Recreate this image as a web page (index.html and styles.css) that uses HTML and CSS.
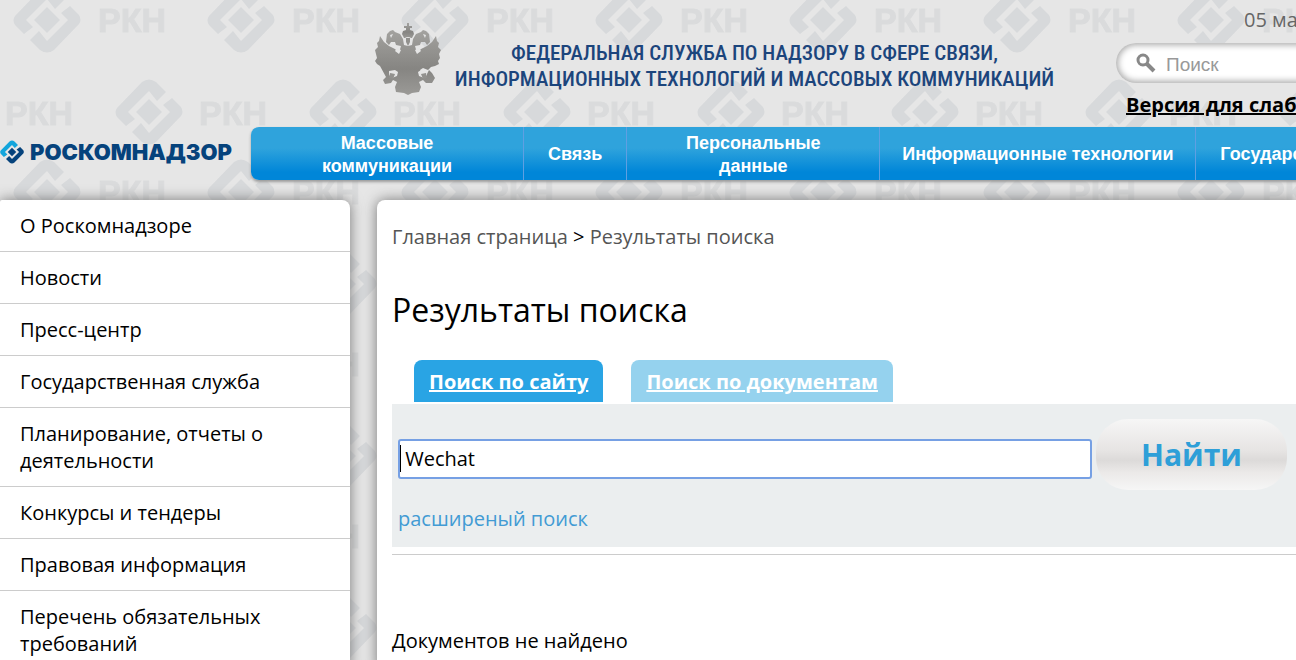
FILE: index.html
```
<!DOCTYPE html>
<html lang="ru">

<head>
    <meta charset="UTF-8" />
    <meta name="viewport" content="width=device-width, initial-scale=1.0" />
    <title>Роскомнадзор - Результаты поиска</title>
    <link rel="stylesheet" href="styles.css">
</head>

<body>
    <!-- Фон с логотипами -->
    <svg class="background" aria-hidden="true">
        <defs>
            <g id="mark">
                <path d="M-32-4L-7-30Q0-35 7-30L17-20L8-11L0-21L-21 0L-14 7L-23 14L-32 5Q-35 0-32-4Z" />
                <path d="M32 4L7 30Q0 35-7 30L-17 20L-8 11L0 21L21 0L14-7L23-14L32-5Q35 0 32 4Z" />
                <path d="M0-13L13 0L0 13L-13 0Z" />
            </g>
            <pattern id="tile" width="194" height="172" patternUnits="userSpaceOnUse">
                <use href="#mark" x="47" y="20" />
                <use href="#mark" x="47" y="192" />
                <text x="98" y="32">РКН</text>
                <use href="#mark" x="149" y="112" />
                <text x="5" y="125">РКН</text>
            </pattern>
        </defs>
        <rect width="100%" height="100%" fill="url(#tile)" />
    </svg>

    <div class="page">
        <header>
            <div class="header-top">
                <svg class="eagle" viewBox="0 0 66 72" aria-hidden="true">
                    <defs>
                        <linearGradient id="silver" x1="0" y1="0" x2="0" y2="1">
                            <stop offset="0" stop-color="#a3a29f" />
                            <stop offset="0.6" stop-color="#868582" />
                            <stop offset="1" stop-color="#9b9a97" />
                        </linearGradient>
                    </defs>
                    <g fill="url(#silver)">
                        <path d="M32 0h2v3h3v2h-2v2l3 1 1 3-2 4h-8l-2-4 1-3 3-1v-2h-2v-2h3z" />
                        <path d="M5 13L9 19L14 23L20 26L24 30L26 23L21 22L20 19L16 19L14 22L11 19L12 11L15 8L18 7L20 9L25 11L28 16L29 22L33 23L37 22L38 16L41 11L46 9L48 7L51 8L54 11L55 19L52 22L50 19L46 19L45 22L40 23L42 30L46 26L52 23L57 19L61 13L62 18L64 20L63 24L66 27L64 31L65 35L63 38L64 41L60 43L56 44L53 47L48 45L45 47L48 51L52 51L54 47L57 50L60 55L57 60L51 60L48 57L44 59L46 64L44 69L37 70L33 72L29 70L21 69L20 64L22 59L18 57L16 60L10 61L8 57L11 54L5 43L2 41L0 38L2 35L1 31L0 27L3 24L2 20L4 18Z" />
                    </g>
                    <g fill="#e5e5e5">
                        <circle cx="33" cy="18" r="4" />
                        <path d="M15 12l3-1-2 4zM51 12l-3-1 2 4zM22 25l4 2-2 4-4-3zM44 25l-4 2 2 4 4-3z" />
                        <path d="M14 48l6-1 3 2-1 4-5 2-3-3zM52 48l-6-1-3 2 1 4 5 2 3-3z" />
                    </g>
                    <path d="M31 15h4v4l-2 4-2-4z" fill="#92918e" />
                    <path d="M15 50l5 1-2 5-4-1zM51 50l-5 1 2 5 4-1z" fill="#92918e" />
                </svg>
                <div class="title">
                    ФЕДЕРАЛЬНАЯ СЛУЖБА ПО НАДЗОРУ В СФЕРЕ СВЯЗИ,<br>
                    ИНФОРМАЦИОННЫХ ТЕХНОЛОГИЙ И МАССОВЫХ КОММУНИКАЦИЙ
                </div>
                <div class="tools">
                    <div class="date">05 марта 2018</div>
                    <form class="site-search">
                        <svg viewBox="0 0 20 20" aria-hidden="true">
                            <circle cx="7" cy="7" r="5" fill="none" stroke="#888" stroke-width="3" />
                            <path d="M11 11L18 18" stroke="#888" stroke-width="4" />
                        </svg>
                        <input type="text" placeholder="Поиск" aria-label="Поиск" />
                    </form>
                    <a class="version" href="#">Версия для слабовидящих</a>
                </div>
            </div>

            <div class="header-bottom">
                <a class="logo" href="#">
                    <svg viewBox="-34 -34 68 68" aria-hidden="true">
                        <path fill="#12a5dc" d="M-32-4L-7-30Q0-35 7-30L17-20L8-11L0-20L-20 0L-13 7L-23 14L-32 5Q-35 0-32-4Z" />
                        <path fill="#06437c" d="M32 4L7 30Q0 35-7 30L-17 20L-8 11L0 20L20 0L13-7L23-14L32-5Q35 0 32 4Z" />
                        <path fill="#06437c" d="M0-12L12 0L0 12L-12 0Z" />
                    </svg>
                    <span>РОСКОМНАДЗОР</span>
                </a>
                <nav class="menu">
                    <a class="wide" href="#">Массовые<br>коммуникации</a>
                    <a href="#">Связь</a>
                    <a class="medium" href="#">Персональные<br>данные</a>
                    <a class="long" href="#">Информационные технологии</a>
                    <a href="#">Государственные услуги</a>
                </nav>
            </div>
        </header>

        <div class="content">
            <ul class="sidebar">
                <li><a href="#">О Роскомнадзоре</a></li>
                <li><a href="#">Новости</a></li>
                <li><a href="#">Пресс-центр</a></li>
                <li><a href="#">Государственная служба</a></li>
                <li><a href="#">Планирование, отчеты о деятельности</a></li>
                <li><a href="#">Конкурсы и тендеры</a></li>
                <li><a href="#">Правовая информация</a></li>
                <li><a href="#">Перечень обязательных требований</a></li>
            </ul>

            <main>
                <div class="breadcrumbs">
                    <a href="#">Главная страница</a> &gt; <a href="#">Результаты поиска</a>
                </div>
                <h1>Результаты поиска</h1>

                <div class="tabs">
                    <a class="active" href="#">Поиск по сайту</a>
                    <a href="#">Поиск по документам</a>
                </div>
                <form class="search-form">
                    <div class="search-row">
                        <div class="field">
                            <input type="text" value=" Wechat" aria-label="Поиск по сайту" />
                            <span class="caret"></span>
                        </div>
                        <button type="button">Найти</button>
                    </div>
                    <a class="advanced" href="#">расширеный поиск</a>
                </form>
                <hr>
                <p class="result">Документов не найдено</p>
            </main>
        </div>
    </div>
</body>

</html>
```
FILE: styles.css
```
* {
    box-sizing: border-box;
}

body {
    margin: 0;
    background-color: #e6e6e6;
    color: #000;
    font-family: "Open Sans", sans-serif;
    font-size: 20px;
    line-height: 27px;
}

.background {
    position: absolute;
    top: 0;
    left: 0;
    width: 100%;
    height: 100%;
    fill: #d7d9db;
    font-family: "Liberation Sans", sans-serif;
    font-size: 34px;
    font-weight: bold;
}

.background text {
    fill: #dadbdc;
    stroke: #dadbdc;
}

.page {
    position: relative;
    min-height: 100vh;
    overflow: hidden;
    display: flex;
    flex-direction: column;
}

/* Шапка */
.header-top {
    display: flex;
    height: 127px;
    padding-left: 375px;
}

.eagle {
    flex: none;
    width: 66px;
    height: 72px;
    margin-top: 23px;
}

.title {
    flex: 1;
    margin-top: 40px;
    padding-right: 48px;
    color: #1c457c;
    font-family: "Roboto Condensed", "Open Sans Condensed", "Liberation Sans Narrow", sans-serif;
    font-size: 21px;
    font-weight: 500;
    line-height: 26px;
    text-align: center;
    white-space: nowrap;
}

.tools {
    flex: none;
    width: 180px;
    white-space: nowrap;
}

.date {
    margin: 6px 0 10px 128px;
    color: #666;
}

.site-search {
    display: flex;
    align-items: center;
    width: 240px;
    height: 40px;
    padding-left: 20px;
    border-radius: 20px;
    background-color: #fff;
    box-shadow: inset 0 0 6px 2px #aaa;
}

.site-search svg {
    width: 20px;
    height: 20px;
    margin-right: 10px;
}

.site-search input {
    width: 160px;
    padding: 3px 0 0;
    border: none;
    outline: none;
    background: none;
    font-family: "Liberation Sans", sans-serif;
    font-size: 19px;
}

.site-search input::placeholder {
    color: #999;
}

.version {
    display: block;
    margin: 8px 0 0 10px;
    color: #000;
    font-weight: bold;
}

.header-bottom {
    display: flex;
    height: 73px;
}

.logo {
    display: flex;
    flex: none;
    width: 251px;
    height: 50px;
    align-items: center;
    color: #06437c;
    font-family: Inter, sans-serif;
    font-size: 22px;
    font-weight: 900;
    text-decoration: none;
}

.logo svg {
    width: 24px;
    height: 24px;
    margin-right: 6px;
}

.menu {
    display: flex;
    flex: none;
    height: 53px;
    border-radius: 8px;
    background: linear-gradient(#2fa3dc 40%, #0086d8 85%);
    box-shadow: 0 2px 3px #999;
    font-family: "Liberation Sans", sans-serif;
    font-size: 18px;
    font-weight: bold;
    line-height: 23px;
}

.menu a {
    display: flex;
    align-items: center;
    justify-content: center;
    padding: 2px 24px 0;
    border-right: 1px solid #5f9fe2;
    color: #fff;
    text-align: center;
    text-decoration: none;
    white-space: nowrap;
}

.menu .wide {
    width: 273px;
}

.menu .medium {
    width: 253px;
}

.menu .long {
    width: 316px;
}

/* Содержимое */
.content {
    display: flex;
    flex: 1;
    gap: 27px;
}

.sidebar {
    flex: none;
    width: 350px;
    margin: 0;
    padding: 0;
    border-radius: 2px 8px 0 0;
    background-color: #fff;
    box-shadow: 0 0 14px #777;
    list-style: none;
}

.sidebar li {
    padding: 12px 60px 12px 20px;
    border-bottom: 1px solid #ccc;
}

.sidebar a {
    color: #000;
    text-decoration: none;
}

main {
    flex: 1;
    padding: 23px 0 0 15px;
    border-radius: 8px 0 0 0;
    background-color: #fff;
    box-shadow: 0 0 14px #777;
}

.breadcrumbs a {
    color: #555;
    text-decoration: none;
}

h1 {
    margin: 38px 0 28px;
    font-size: 32px;
    font-weight: normal;
    line-height: 44px;
}

.tabs {
    display: flex;
    gap: 28px;
    margin: 0 0 2px 22px;
}

.tabs a {
    height: 42px;
    padding: 8px 15px;
    border-radius: 8px 8px 0 0;
    background-color: #95d2ee;
    color: #fff;
    font-weight: bold;
}

.tabs .active {
    background-color: #29a4e4;
}

.search-form {
    height: 143px;
    padding: 15px 9px 0 6px;
    background-color: #ebeeef;
}

.search-row {
    display: flex;
    align-items: baseline;
    gap: 4px;
}

.field {
    position: relative;
    flex: 1;
    height: 40px;
}

.field input {
    width: 100%;
    height: 40px;
    padding: 0;
    border: 2px solid #76a0e4;
    border-radius: 3px;
    outline: none;
    font-family: inherit;
    font-size: 20px;
}

/* Курсор ввода */
.caret {
    position: absolute;
    top: 6px;
    left: 2px;
    width: 1px;
    height: 27px;
    background-color: #000;
}

.search-form button {
    width: 191px;
    height: 71px;
    border: none;
    border-radius: 32px;
    background: linear-gradient(#f6f6f6, #e6e4e3 45%, #dcdad9 58%, #ebe9e8 75%, #f6f6f6);
    color: #2e9fd8;
    font-family: inherit;
    font-size: 30px;
    font-weight: bold;
}

.advanced {
    display: inline-block;
    margin-top: 15px;
    color: #429bd4;
    text-decoration: none;
}

hr {
    margin: 7px 0 0;
    border: none;
    border-top: 1px solid #ccc;
}

.result {
    margin: 72px 0 0;
}
```
